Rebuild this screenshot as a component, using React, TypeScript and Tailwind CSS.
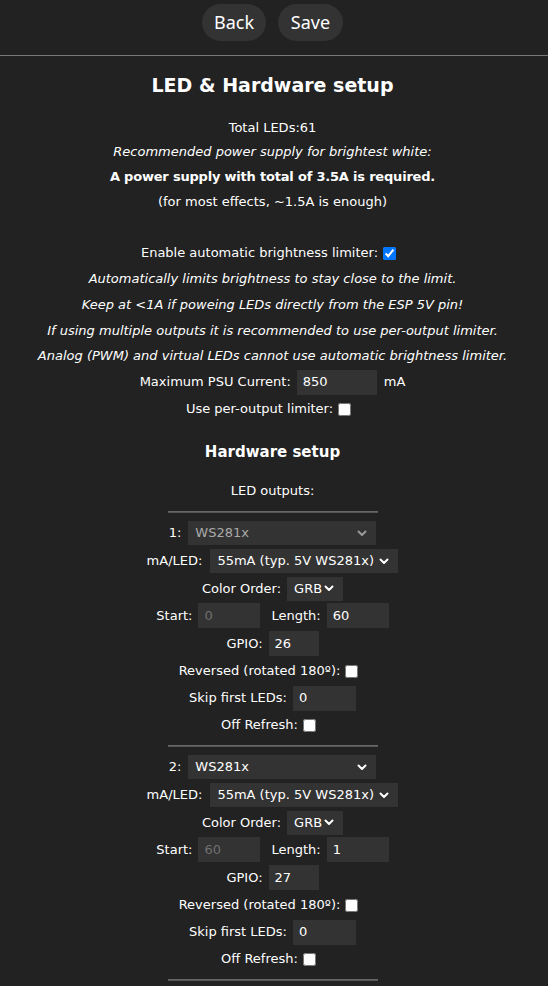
import React from "react";

const font = { fontFamily: '"DejaVu Sans", Verdana, sans-serif' };

function Chevron({ dim }: { dim?: boolean }) {
  return (
    <svg width="10" height="7" viewBox="0 0 10 7" className="shrink-0">
      <path
        d="M1.5 1.5 L5 5 L8.5 1.5"
        fill="none"
        stroke={dim ? "#999" : "#fff"}
        strokeWidth="2"
        strokeLinecap="round"
        strokeLinejoin="round"
      />
    </svg>
  );
}

function Select({
  value,
  width,
  dim,
}: {
  value: string;
  width: string;
  dim?: boolean;
}) {
  return (
    <div
      className={`flex items-center justify-between h-[24px] bg-[#333] pl-[7px] pr-[9px] ${width} ${
        dim ? "text-[#aaa]" : "text-white"
      }`}
    >
      <span>{value}</span>
      <Chevron dim={dim} />
    </div>
  );
}

function Field({
  value,
  width,
  dim,
}: {
  value: string;
  width: string;
  dim?: boolean;
}) {
  return (
    <div
      className={`flex items-center h-[25px] bg-[#333] px-[6px] ${width} ${
        dim ? "text-[#6f6f6f]" : "text-white"
      }`}
    >
      {value}
    </div>
  );
}

function Box({ checked }: { checked?: boolean }) {
  return (
    <input
      type="checkbox"
      defaultChecked={checked}
      className="w-[13px] h-[13px] m-0 shrink-0"
    />
  );
}

function Row({ h, children }: { h: string; children: React.ReactNode }) {
  return (
    <div className={`flex items-center justify-center gap-[6px] ${h}`}>
      {children}
    </div>
  );
}

// label + checkbox; the original has a trailing space after the box
function CheckRow({ h, label, checked }: { h: string; label: string; checked?: boolean }) {
  return (
    <div className={`flex items-center justify-center gap-[5px] pr-[8px] ${h}`}>
      <span>{label}</span>
      <Box checked={checked} />
    </div>
  );
}

function Divider() {
  return <div className="w-[210px] h-[2px] bg-[#555] border-t border-[#666] mx-auto" />;
}

function Output({ n, start, len, gpio, dimType }: { n: number; start: string; len: string; gpio: string; dimType?: boolean }) {
  return (
    <div className="pt-[6px] pb-[7px]">
      <Row h="h-[28px]">
        <span className="pr-[1px]">{n}:</span>
        <Select value="WS281x" width="w-[188px]" dim={dimType} />
      </Row>
      <Row h="h-[28px]">
        <span className="pr-[2px]">mA/LED:</span>
        <Select value="55mA (typ. 5V WS281x)" width="w-[188px]" />
      </Row>
      <Row h="h-[27px]">
        <span>Color Order:</span>
        <Select value="GRB" width="w-[56px]" />
      </Row>
      <Row h="h-[27px]">
        <span>Start:</span>
        <Field value={start} width="w-[62px]" dim />
        <span className="pl-[5px]">Length:</span>
        <Field value={len} width="w-[62px]" />
      </Row>
      <Row h="h-[29px]">
        <span>GPIO:</span>
        <Field value={gpio} width="w-[50px]" />
      </Row>
      <CheckRow h="h-[26px]" label="Reversed (rotated 180º):" />
      <Row h="h-[28px]">
        <span>Skip first LEDs:</span>
        <Field value="0" width="w-[63px]" />
      </Row>
      <CheckRow h="h-[26px]" label="Off Refresh:" />
    </div>
  );
}

export default function App() {
  return (
    <div
      className="min-h-screen bg-[#222] text-white text-[13px] text-center pr-[3px]"
      style={font}
    >
      <header className="h-[56px] flex justify-center gap-[12px] pt-[4px] border-b border-[#777] -mr-[3px] pr-[3px]">
        <button
          className="h-[37px] w-[64px] rounded-full bg-[#333] text-white text-[18px]"
          style={{ fontFamily: '"Noto Sans", "Open Sans", sans-serif' }}
        >
          Back
        </button>
        <button
          className="h-[37px] w-[65px] rounded-full bg-[#333] text-white text-[18px]"
          style={{ fontFamily: '"Noto Sans", "Open Sans", sans-serif' }}
        >
          Save
        </button>
      </header>

      <h2 className="mt-[14px] h-[30px] leading-[30px] text-[19px] font-bold">
        LED &amp; Hardware setup
      </h2>

      <div className="mt-[14px] leading-[25px]">
        <p className="translate-y-[1px]">Total LEDs:61</p>
        <p className="italic">Recommended power supply for brightest white:</p>
        <p className="font-bold tracking-[-0.2px]">A power supply with total of 3.5A is required.</p>
        <p>(for most effects, ~1.5A is enough)</p>
      </div>

      <div className="mt-[26px] leading-[25.75px]">
        <CheckRow h="h-[26px]" label="Enable automatic brightness limiter:" checked />
        <p className="italic">Automatically limits brightness to stay close to the limit.</p>
        <p className="italic">Keep at &lt;1A if poweing LEDs directly from the ESP 5V pin!</p>
        <p className="italic">
          If using multiple outputs it is recommended to use per-output limiter.
        </p>
        <p className="italic">
          Analog (PWM) and virtual LEDs cannot use automatic brightness limiter.
        </p>
      </div>

      <Row h="h-[26px]">
        <span>Maximum PSU Current:</span>
        <Field value="850" width="w-[80px]" />
        <span className="pl-[1px]">mA</span>
      </Row>
      <CheckRow h="h-[28px]" label="Use per-output limiter:" />

      <h3 className="mt-[19px] h-[20px] leading-[20px] text-[15px] font-bold">
        Hardware setup
      </h3>
      <p className="mt-[16px] h-[25px] leading-[25px]">LED outputs:</p>

      <div className="mt-[8px]">
        <Divider />
        <Output n={1} start="0" len="60" gpio="26" dimType />
        <Divider />
        <Output n={2} start="60" len="1" gpio="27" />
        <Divider />
      </div>
    </div>
  );
}
